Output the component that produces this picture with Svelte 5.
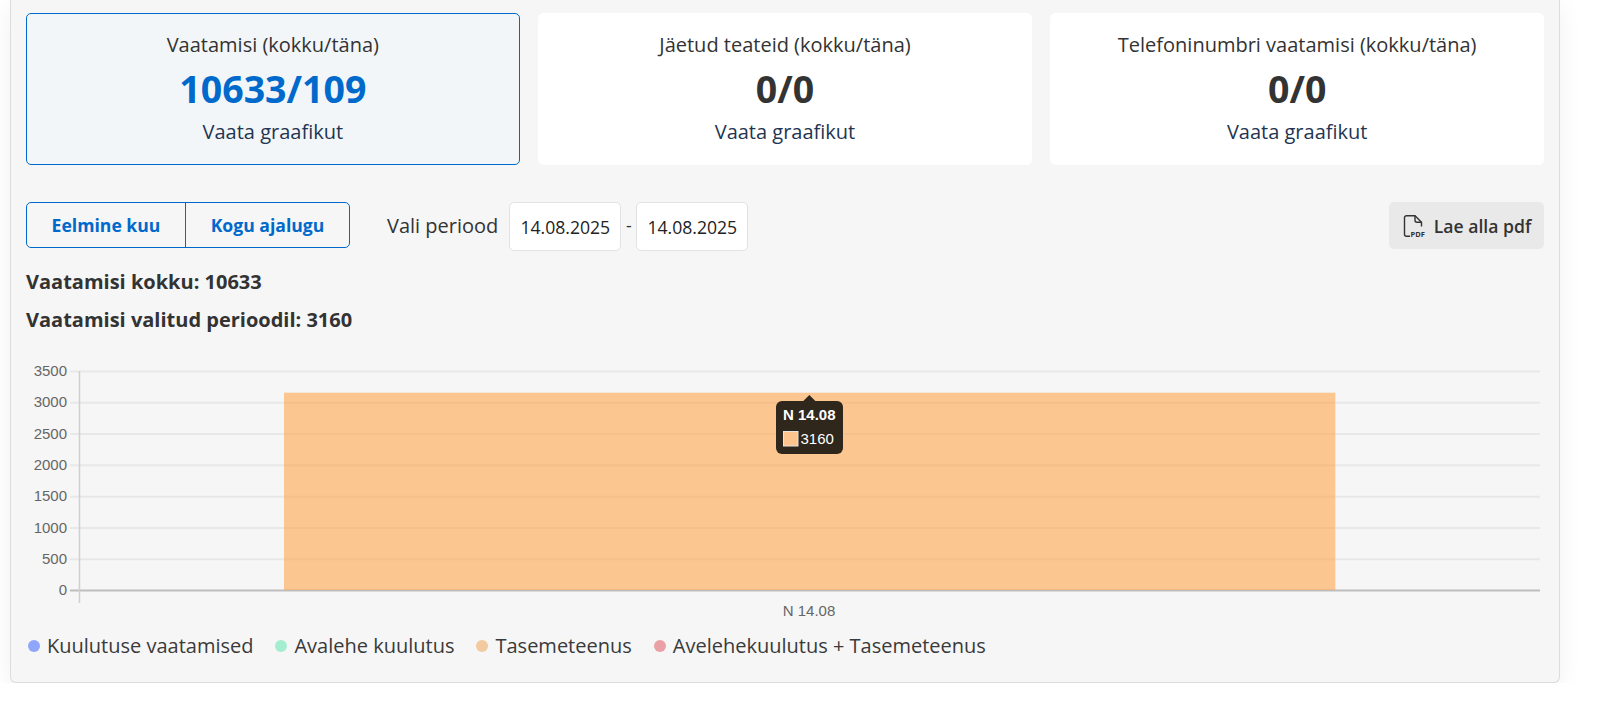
<script>
  const cards = [
    { label: 'Vaatamisi (kokku/täna)', value: '10633/109', active: true },
    { label: 'Jäetud teateid (kokku/täna)', value: '0/0', active: false },
    { label: 'Telefoninumbri vaatamisi (kokku/täna)', value: '0/0', active: false }
  ];
  const legend = [
    { label: 'Kuulutuse vaatamised', color: '#8fa6fb' },
    { label: 'Avalehe kuulutus', color: '#a5edd1' },
    { label: 'Tasemeteenus', color: '#f3c9a0' },
    { label: 'Avelehekuulutus + Tasemeteenus', color: '#eaa1a5' }
  ];
  const ticks = [3500, 3000, 2500, 2000, 1500, 1000, 500, 0];
  const y = (v) => 366.4 + (3500 - v) * 0.06263;
</script>

<div class="panel">
  <div class="cards">
    {#each cards as c}
      <div class="card" class:active={c.active}>
        <div class="label">{c.label}</div>
        <div class="value">{c.value}</div>
        <div class="link">Vaata graafikut</div>
      </div>
    {/each}
  </div>

  <div class="toolbar">
    <div class="segment">
      <button class="seg first">Eelmine kuu</button>
      <button class="seg">Kogu ajalugu</button>
    </div>
    <span class="period">Vali periood</span>
    <div class="date">14.08.2025</div>
    <span class="dash">-</span>
    <div class="date">14.08.2025</div>
    <button class="pdf">
      <svg width="24" height="24" viewBox="0 0 24 24" fill="none">
        <path d="M8 22.3H4.5a2 2 0 0 1-2-2V3.700a2 2 0 0 1 2-2h8.500l6.500 6.500v4.300" stroke="#333" stroke-width="1.4" />
        <path d="M13 1.700v4.500a2 2 0 0 0 2 2h4.500" stroke="#333" stroke-width="1.4" />
        <text x="8.500" y="23" class="pdft">PDF</text>
      </svg>
      Lae alla pdf
    </button>
  </div>

  <p class="total">Vaatamisi kokku: 10633</p>
  <p class="total second">Vaatamisi valitud perioodil: 3160</p>

  <svg class="chart" width="1518" height="270" viewBox="26 352 1518 270">
    {#each ticks as t}
      <line x1="70" x2="1540" y1={y(t) + 5} y2={y(t) + 5} stroke={t === 0 ? '#bdbdbd' : '#e8e8e8'} stroke-width="2" />
      <text x="67" y={y(t) + 9.6} class="tick" text-anchor="end">{t}</text>
    {/each}
    <line x1="79.5" x2="79.5" y1="371" y2="603" stroke="#cfcfcf" stroke-width="1.5" />
    <rect x="284" y="392.7" width="1051.3" height="197.3" fill="#ff9e3d" fill-opacity="0.55" />
    <text x="809" y="615.500" class="tick" text-anchor="middle">N 14.08</text>
    <path d="M803.3 401L809.3 395L815.3 401Z" fill="#2f261c" />
    <rect x="776" y="401" width="67" height="53" rx="6" fill="#2f261c" />
    <text x="783" y="420" class="ttitle">N 14.08</text>
    <rect x="783.5" y="431.5" width="14.5" height="14.5" fill="#fdc58d" stroke="#e8e4df" stroke-width="1" />
    <text x="800.500" y="444" class="tval">3160</text>
  </svg>

  <div class="legend">
    {#each legend as l}
      <div class="item">
        <span class="dot" style="background:{l.color}"></span>
        {l.label}
      </div>
    {/each}
  </div>
</div>

<style>
  :global(body) {
    margin: 0;
    background: #fff;
    font-family: "Open Sans", sans-serif;
    color: #333;
  }
  .panel {
    box-sizing: border-box;
    width: 1550px;
    height: 683px;
    margin-left: 10px;
    padding: 13px 15px 0;
    background: #f6f6f6;
    border: 1px solid #dcdcdc;
    border-top: none;
    border-radius: 0 0 6px 6px;
    box-shadow: 0 6px 24px rgba(0, 0, 0, 0.06);
  }
  .cards {
    display: grid;
    grid-template-columns: repeat(3, 1fr);
    gap: 18.500px;
  }
  .card {
    box-sizing: border-box;
    height: 152px;
    background: #fff;
    border: 1px solid #fff;
    border-radius: 5px;
    text-align: center;
    padding-top: 17px;
  }
  .card.active {
    background: #f3f6f8;
    border-color: #0069cc;
  }
  .label {
    font-size: 20px;
    line-height: 27px;
  }
  .value {
    font-size: 37.500px;
    font-weight: 700;
    line-height: 50px;
    margin-top: 6px;
  }
  .active .value {
    color: #0069cc;
  }
  .link {
    font-size: 20px;
    line-height: 27px;
    margin-top: 4px;
    color: #1f3552;
  }
  .toolbar {
    display: flex;
    align-items: flex-start;
    margin-top: 37px;
  }
  .segment {
    display: flex;
    box-sizing: border-box;
    height: 46px;
    border: 1px solid #0069cc;
    border-radius: 5px;
  }
  .seg {
    border: none;
    background: none;
    padding: 0;
    font: 700 17.600px "Open Sans", sans-serif;
    color: #0069cc;
    width: 163px;
  }
  .seg.first {
    width: 159px;
    border-right: 1px solid #0069cc;
  }
  .period {
    font-size: 20px;
    line-height: 47px;
    margin-left: 37px;
    margin-right: 11px;
  }
  .date {
    box-sizing: border-box;
    width: 112px;
    height: 49px;
    display: flex;
    align-items: center;
    justify-content: center;
    background: #fff;
    border: 1px solid #e2e2e2;
    border-radius: 5px;
    font-size: 17.600px;
    color: #222;
  }
  .dash {
    width: 15px;
    text-align: center;
    font-size: 17.600px;
    line-height: 47px;
  }
  .pdf {
    margin-left: auto;
    display: flex;
    align-items: center;
    gap: 8px;
    box-sizing: border-box;
    width: 155px;
    height: 47px;
    justify-content: center;
    border: none;
    border-radius: 5px;
    background: #e9e9e9;
    font: 600 17.600px "Open Sans", sans-serif;
    color: #333;
    padding: 0;
  }
  .pdft {
    font: 700 7.500px "Open Sans", sans-serif;
    fill: #333;
  }
  .total {
    margin: 17px 0 0;
    font-size: 20px;
    font-weight: 700;
    line-height: 27px;
  }
  .total.second {
    margin-top: 11px;
  }
  .chart {
    display: block;
    margin-top: 19px;
  }
  .tick {
    font: 15px "Liberation Sans", sans-serif;
    fill: #666;
  }
  .ttitle {
    font: 700 15px "Liberation Sans", sans-serif;
    fill: #fff;
  }
  .tval {
    font: 15px "Liberation Sans", sans-serif;
    fill: #fff;
  }
  .legend {
    display: flex;
    gap: 22px;
    margin-top: 10px;
    margin-left: 2px;
    font-size: 20px;
    color: #3a3a3a;
  }
  .item {
    display: flex;
    align-items: center;
    gap: 7px;
  }
  .dot {
    width: 12px;
    height: 12px;
    border-radius: 50%;
  }
</style>
